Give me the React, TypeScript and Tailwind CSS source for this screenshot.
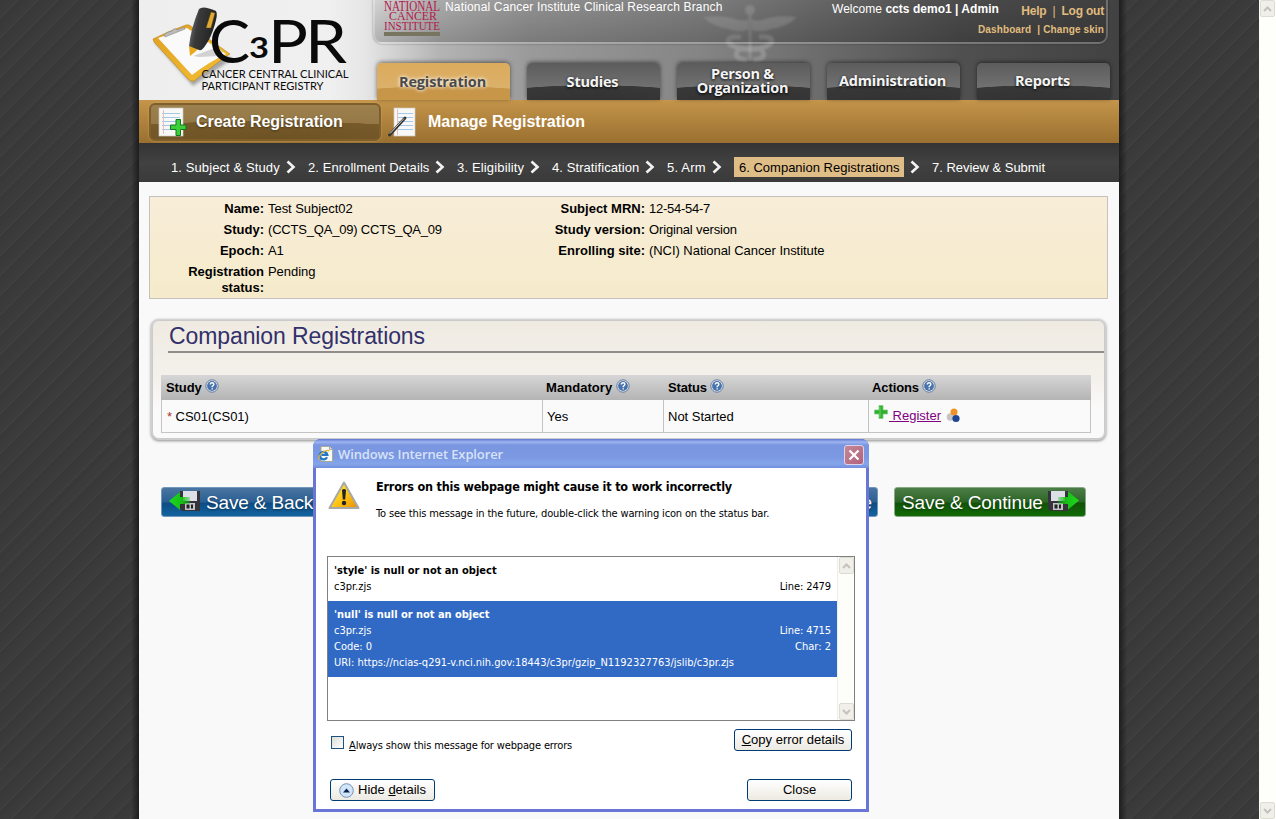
import React from "react";

const TABS = ["Registration", "Studies", "Person &\nOrganization", "Administration", "Reports"];

const STEPS = [
  { label: "1. Subject & Study", width: "w-[137px]", gap: "ml-[6px]", text: "tracking-[0.1px]" },
  { label: "2. Enrollment Details", width: "w-[149px]", gap: "ml-[6px]", text: "tracking-[0.07px]" },
  { label: "3. Eligibility", width: "w-[95px]", gap: "ml-[6px]", text: "tracking-[0.16px]" },
  { label: "4. Stratification", width: "w-[115px]", gap: "ml-[6px]", text: "tracking-[0.08px]" },
  { label: "5. Arm", width: "w-[67px]", gap: "ml-[6px]", text: "tracking-[0.2px]" },
  { label: "6. Companion Registrations", width: "w-[198px]", gap: "ml-[6px]", text: "" },
  { label: "7. Review & Submit", width: "w-[130px]", gap: "", text: "tracking-[-0.02px]" },
];

const STRIPES =
  "bg-[#393939] bg-[repeating-linear-gradient(135deg,#383838_0px,#3a3a3a_6px,#3c3c3c_12px,#414141_13px,#383838_14px)]";

function Gutter({ side }: { side: "left" | "right" }) {
  return (
    <div className={`flex h-full shrink-0 ${side === "left" ? "w-[139px] justify-end" : "w-[140px]"} ${STRIPES}`}>
      <div
        className={
          side === "left"
            ? "h-full w-2 bg-gradient-to-r from-transparent to-black/50"
            : "h-full w-2 bg-gradient-to-l from-transparent to-black/50"
        }
      />
    </div>
  );
}

function Logo() {
  return (
    <svg width="233" height="100" viewBox="0 0 233 100" className="shrink-0">
      <defs>
        <linearGradient id="pen" x1="0" x2="1" y1="0" y2="0.3">
          <stop offset="0" stopColor="#888" />
          <stop offset="0.4" stopColor="#3a3a3a" />
          <stop offset="1" stopColor="#222" />
        </linearGradient>
        <linearGradient id="gold" x1="0" x2="1" y1="0" y2="1">
          <stop offset="0" stopColor="#e0a020" />
          <stop offset="1" stopColor="#f4bf35" />
        </linearGradient>
        <filter id="soft" x="-20%" y="-20%" width="140%" height="140%">
          <feGaussianBlur stdDeviation="1.6" />
        </filter>
      </defs>
      <path d="M15 42 L54 86 L93 59 L60 40 Z" fill="#000" opacity="0.3" filter="url(#soft)" />
      <path d="M14 39 Q30 31 47 25 Q50 24 53 27 L91 54 Q76 64 55 81 Q52 82 49 79 L15 42 Z" fill="url(#gold)" stroke="#b9821c" strokeWidth="0.6" />
      <path d="M19 38 L48 28 L87 54 Q70 62 53 75 Z" fill="#fafafa" />
      <path d="M54 56 L76 48 L84 52 L80 56 L60 57 Z" fill="#aaa" opacity="0.5" />
      <path d="M25 35 Q27 32 33 31 Q35 27 38 30 Q41 29 45 27 L46 29 L26 37 Z" fill="#bbb" stroke="#888" strokeWidth="0.6" />
      <path d="M50 46 L60 48 L56 52 L51 56 Z" fill="#e9a91f" />
      <path d="M60 9 Q64 5 77 11 Q79 14 76 24 Q72 38 66 46 Q63 51 60 50 L50 46 Q52 28 60 9 Z" fill="url(#pen)" />
      <path d="M72 12 L76 13 L72 28 L67 28 Z" fill="#e3aa32" stroke="#5b4718" strokeWidth="0.5" />
      <g fontFamily="Lato, sans-serif" fill="#0a0a0a" fontWeight="400">
        <text x="70" y="63" fontSize="60" textLength="41" lengthAdjust="spacingAndGlyphs">C</text>
        <text x="110" y="58" fontSize="29" fontWeight="700" textLength="20" lengthAdjust="spacingAndGlyphs">3</text>
        <text x="129" y="63" fontSize="60" textLength="40" lengthAdjust="spacingAndGlyphs">P</text>
        <text x="166" y="63" fontSize="60" textLength="42" lengthAdjust="spacingAndGlyphs">R</text>
        <text x="62.5" y="78" fontSize="11.3" textLength="147" lengthAdjust="spacingAndGlyphs">CANCER CENTRAL CLINICAL</text>
        <text x="62.5" y="90" fontSize="11.3" textLength="122" lengthAdjust="spacingAndGlyphs">PARTICIPANT REGISTRY</text>
      </g>
    </svg>
  );
}

function NciLogo() {
  return (
    <svg width="57" height="37" viewBox="0 0 57 37" className="shrink-0">
      <g fontFamily="'Liberation Serif', serif" fill="#b3194d">
        <text x="0" y="10.500" fontSize="14" textLength="56" lengthAdjust="spacingAndGlyphs">NATIONAL</text>
        <text x="5" y="20.300" fontSize="13.500" textLength="48" lengthAdjust="spacingAndGlyphs">CANCER</text>
        <text x="0" y="30" fontSize="13.500" textLength="56" lengthAdjust="spacingAndGlyphs">INSTITUTE</text>
      </g>
      <rect x="0" y="32" width="56" height="4" fill="#77745f" />
    </svg>
  );
}

function Caduceus() {
  return (
    <svg width="96" height="60" viewBox="0 0 96 60" className="blur-[1.2px]">
      <g fill="#c4c4c4" opacity="0.3">
        <circle cx="47" cy="7" r="5" />
        <rect x="45.500" y="10" width="3" height="48" />
        <path d="M0 14 Q20 12 32 16 Q42 19 45 16 L45 27 Q34 30 26 26 Q10 24 0 14 Z" />
        <path d="M94 14 Q74 12 62 16 Q52 19 49 16 L49 27 Q60 30 68 26 Q84 24 94 14 Z" />
      </g>
      <g fill="none" stroke="#c4c4c4" opacity="0.35" strokeWidth="5">
        <path d="M38 34 Q22 33 26 40 Q32 47 58 46 Q66 56 50 57" />
        <path d="M56 34 Q72 33 68 40 Q62 47 36 46 Q28 56 44 57" />
      </g>
    </svg>
  );
}

function Sheet({ kind }: { kind: "add" | "edit" }) {
  const add = kind === "add";
  return (
    <svg width="29" height="31" viewBox="0 0 29 31" className="shrink-0">
      <rect x={add ? 1 : 6} y="1" width={add ? 24 : 21} height="28" fill="#f8f8f6" stroke="#cfcac0" strokeWidth="0.7" />
      <g stroke="#a4c8ea" strokeWidth="1">
        {[6.5, 10.5, 14.5, 18.5, 22.5].map((y) => (
          <path key={y} d={add ? `M4 ${y} H22` : `M9 ${y} H25`} />
        ))}
      </g>
      <path d={add ? "M5.500 3 V27" : "M9.500 2 V28"} stroke="#f0bcbc" strokeWidth="1" />
      {add ? (
        <path d="M18 12.500 h4.500 v5.500 h5.500 v4.500 h-5.500 v6 h-4.500 v-6 h-5.500 v-4.500 h5.500 z" fill="#3bcf3b" stroke="#14761a" strokeWidth="1" />
      ) : (
        <g>
          <path d="M1.500 28 L17 11" stroke="#333" strokeWidth="2.800" strokeLinecap="round" />
          <path d="M2 26.500 L16 11.500" stroke="#ccc" strokeWidth="1" />
        </g>
      )}
    </svg>
  );
}

function HelpMark({ gap }: { gap: string }) {
  return (
    <svg width="14" height="14" viewBox="0 0 14 14" className={`${gap} mt-[-2px] shrink-0`}>
      <circle cx="7" cy="7" r="6.200" fill="#e9eef5" stroke="#62799b" strokeWidth="1" />
      <circle cx="7" cy="7" r="4.900" fill="#4772ab" />
      <path d="M5.300 5.600 Q5.300 3.700 7.100 3.700 Q8.900 3.700 8.900 5.300 Q8.900 6.300 7.200 7.300 V8.200 M7.200 9.300 V10.600" fill="none" stroke="#fff" strokeWidth="1.400" />
    </svg>
  );
}

function Floppy({ dir }: { dir: "left" | "right" }) {
  const x = dir === "left" ? 11 : 0;
  return (
    <svg width="32" height="24" viewBox="0 0 32 24" className="shrink-0">
      <defs>
        <linearGradient id={`arrow-${dir}`} x1={dir === "left" ? 0 : 1} x2={dir === "left" ? 1 : 0}>
          <stop offset="0" stopColor="#1fd81f" />
          <stop offset="0.6" stopColor="#16c016" />
          <stop offset="1" stopColor="#16c016" stopOpacity="0.3" />
        </linearGradient>
      </defs>
      <g transform={`translate(${x} 0)`}>
        <path d="M0 1 H20 V21 H2 L0 19 Z" fill="#34343a" />
        <rect x="3" y="1" width="14" height="10" fill="#dcdfe6" />
        <rect x="5" y="13" width="10" height="7" fill="#c4c4c8" />
        <rect x="6.500" y="14.500" width="3" height="4" fill="#222" />
        <rect x="11" y="14.500" width="2" height="4" fill="#222" />
      </g>
      {dir === "left" ? (
        <path d="M0 11 L11 2 V7 H21 V14 H11 V20 Z" fill="url(#arrow-left)" />
      ) : (
        <path d="M31 10.500 L20 1.500 V7 H10 V14 H20 V19.500 Z" fill="url(#arrow-right)" />
      )}
    </svg>
  );
}

function Chevron() {
  return (
    <svg width="10" height="14" viewBox="0 0 10 14" className="shrink-0">
      <path d="M1.500 1.500 L7.500 7 L1.500 12.500" fill="none" stroke="#f2f2f2" strokeWidth="2.600" />
    </svg>
  );
}

function ScrollArrow({ up }: { up: boolean }) {
  return (
    <div className="flex h-[17px] w-[15px] items-center justify-center rounded-[2px] border border-[#dddcd2] bg-[#f0efe9]">
      <svg width="9" height="6" viewBox="0 0 9 6">
        <path d={up ? "M1 5 L4.500 1.500 L8 5" : "M1 1 L4.500 4.500 L8 1"} fill="none" stroke="#c4c3bb" strokeWidth="2" />
      </svg>
    </div>
  );
}

function Field({ label, children, labelWidth = "w-[114px]" }: { label: string; children: React.ReactNode; labelWidth?: string }) {
  return (
    <div className="mb-[5px] flex gap-1 leading-4">
      <div className={`${labelWidth} shrink-0 text-right font-bold`}>{label}</div>
      <div className="whitespace-nowrap tracking-[-0.05px]">{children}</div>
    </div>
  );
}

function Header() {
  return (
    <header className="relative flex h-[100px] shrink-0 bg-[linear-gradient(90deg,#eeeeee_0px,#f0f0f0_190px,#e6e6e6_225px,#b4b4b4_300px,#9a9a9a_390px,#858585_560px,#6c6c6c_680px,#505050_820px,#424242_980px)]">
      <Logo />
      <div className="absolute left-[564px] top-[3px]">
        <Caduceus />
      </div>
      <div className="relative flex flex-1 flex-col">
        <div className="ml-px flex h-[44px] w-[735px] rounded-b-[9px] border-2 border-t-0 border-white/25 bg-gradient-to-b from-black/5 to-black/20 pl-[9px] shadow-[0_0_2px_rgba(0,0,0,0.4)]">
          <NciLogo />
          <div className="ml-[4px] w-[387px] whitespace-nowrap text-[12px] leading-[14px] tracking-[0.16px] text-white">
            National Cancer Institute Clinical Research Branch
          </div>
          <div className="w-[190px] whitespace-nowrap pt-[2px] text-[12px] leading-[14px] tracking-[0.03px] text-white">
            Welcome <b>ccts demo1 | Admin</b>
          </div>
          <div className="-ml-[44px] flex w-[126px] flex-col whitespace-nowrap text-[#e0bc7e]">
            <div className="flex h-[14px] items-center justify-end gap-[6px] pt-[8px] text-[12px] font-bold tracking-[-0.2px]">
              <span>Help</span>
              <span className="font-normal">|</span>
              <span>Log out</span>
            </div>
            <div className="mt-[9px] flex justify-end gap-[3px] text-[10px] font-bold leading-[14px] tracking-[0.12px]">
              <span className="mr-[3px]">Dashboard</span>
              <span>|</span>
              <span>Change skin</span>
            </div>
          </div>
        </div>
        <nav className="ml-[5px] mt-[19px] flex gap-[17px]">
          {TABS.map((tab, i) => (
            <div
              key={tab}
              className={
                i === 0
                  ? "flex h-[37px] w-[133px] items-center justify-center rounded-t-[5px] bg-[radial-gradient(120px_14px_at_50%_100%,#c89648_0px,#c89648_96%,transparent_100%),linear-gradient(#dcab5c,#dbb370)] pr-[2px] shadow-[0_-1px_4px_rgba(0,0,0,0.5)]"
                  : "flex h-[37px] w-[133px] items-center justify-center rounded-t-[5px] bg-[radial-gradient(120px_15px_at_50%_100%,#323232_0px,#383838_96%,transparent_100%),linear-gradient(#5c5c5c,#7c7c7c)] pr-[2px] shadow-[0_-1px_4px_rgba(0,0,0,0.5)]"
              }
            >
              <span
                className={`whitespace-pre text-center font-['Open_Sans','Noto_Sans',sans-serif] text-[14.500px] font-bold leading-[14px] ${
                  i === 0
                    ? "tracking-[-0.15px] text-[#4a4a4a] [text-shadow:0_0_4px_#fff,0_0_3px_#fff8]"
                    : "tracking-[-0.2px] text-[#f4f4f4] [text-shadow:0_1px_3px_#000]"
                } ${i === 2 || i === 3 || i === 4 ? "-mt-[2px]" : ""}`}
              >
                {tab}
              </span>
            </div>
          ))}
        </nav>
      </div>
    </header>
  );
}

function SubNav() {
  return (
    <div className="flex h-[43px] shrink-0 items-start bg-gradient-to-b from-[#c4954a] to-[#9a7030] pl-[10px] pt-[3px] text-[16px] font-bold text-white">
      <div className="flex h-[38px] w-[232px] items-center rounded-[6px] border-2 border-[#7e5f2b] bg-[radial-gradient(200px_18px_at_50%_100%,#6d5224_0px,#775a2a_98%,transparent_100%),linear-gradient(#9c804d,#8f7240)] pl-[7px] shadow-[0_0_2px_#d5ac62]">
        <Sheet kind="add" />
        <span className="ml-[9px] whitespace-nowrap tracking-[-0.04px] [text-shadow:0_1px_2px_#4a3818]">Create Registration</span>
      </div>
      <div className="ml-[7px] flex h-[38px] items-center">
        <Sheet kind="edit" />
        <span className="ml-[11px] whitespace-nowrap tracking-[-0.02px]">Manage Registration</span>
      </div>
    </div>
  );
}

function Steps() {
  return (
    <div className="flex h-[39px] shrink-0 bg-gradient-to-b from-[#343434] via-[#414141] to-[#3a3a3a] pl-[32px] pt-[14px] text-[13px] leading-[22px] text-white">
      {STEPS.map((s, i) => (
        <div key={s.label} className={`${s.width} flex h-5 items-center whitespace-nowrap`}>
          <span className={i === 5 ? "h-5 w-[170px] bg-[#dfbd87] pl-[5px] text-black" : `h-5 ${s.text}`}>{s.label}</span>
          {i < 6 && (
            <span className={s.gap}>
              <Chevron />
            </span>
          )}
        </div>
      ))}
    </div>
  );
}

function Summary() {
  return (
    <section className="mx-[10px] mt-[14px] flex h-[103px] w-[959px] shrink-0 border border-[#c5c2bd] bg-gradient-to-b from-[#f8edd8] to-[#f5ebcb] pt-[4px] text-[13px] text-black">
      <div className="w-[381px]">
        <Field label="Name:">Test Subject02</Field>
        <Field label="Study:"><span className="tracking-[-0.2px]">(CCTS_QA_09) CCTS_QA_09</span></Field>
        <Field label="Epoch:">A1</Field>
        <Field label="Registration status:" labelWidth="w-[114px] pl-[30px]">Pending</Field>
      </div>
      <div>
        <Field label="Subject MRN:"><span className="tracking-[-0.25px]">12-54-54-7</span></Field>
        <Field label="Study version:"><span className="tracking-[-0.15px]">Original version</span></Field>
        <Field label="Enrolling site:">(NCI) National Cancer Institute</Field>
      </div>
    </section>
  );
}

function Companions() {
  return (
    <section className="ml-[13px] mt-[21px] flex h-[119px] w-[953px] shrink-0 flex-col rounded-[7px] border border-[#cbcbcb] bg-[linear-gradient(#efebe2,#f4f1ec_50%,#fbfafa_75%)] shadow-[0_0_1px_1px_#d4d4d4,0_1px_3px_1px_#888]">
      <h2 className="ml-[15px] h-[32px] shrink-0 whitespace-nowrap border-b-2 border-[#918b8b] pl-px text-[23px] leading-[31px] tracking-[-0.1px] text-[#33306b]">
        Companion Registrations
      </h2>
      <div className="ml-[8px] mt-[22px] w-[930px] text-[13px] text-black">
        <div className="flex h-[25px] items-center bg-gradient-to-b from-[#d6d6d6] to-[#b4b4b4] pb-px font-bold">
          <div className="flex w-[380px] items-center pl-[5px]"><span className="mt-[2px] tracking-[-0.1px]">Study</span><HelpMark gap="ml-[3px]" /></div>
          <div className="flex w-[121px] items-center pl-[5px]"><span className="mt-[2px] tracking-[0.05px]">Mandatory</span><HelpMark gap="ml-[4px]" /></div>
          <div className="flex w-[205px] items-center pl-[6px]"><span className="mt-[2px] tracking-[-0.15px]">Status</span><HelpMark gap="ml-[3px]" /></div>
          <div className="flex items-center pl-[5px]"><span className="mt-[2px] tracking-[-0.1px]">Actions</span><HelpMark gap="ml-[3px]" /></div>
        </div>
        <div className="flex h-[33px] border border-t-0 border-[#c4c4c4] bg-[#fafafa] leading-[34px]">
          <div className="w-[381px] border-r border-[#c4c4c4] pl-[5px] tracking-[-0.05px]"><span className="text-[#a33]">*</span> CS01(CS01)</div>
          <div className="w-[121px] border-r border-[#c4c4c4] pl-[4px]">Yes</div>
          <div className="w-[205px] border-r border-[#c4c4c4] pl-[4px]">Not Started</div>
          <div className="flex pl-[5px]">
            <svg width="14" height="14" viewBox="0 0 14 14" className="mt-[5px]">
              <path d="M5 0.500 H9 V5 H13.500 V9 H9 V13.500 H5 V9 H0.500 V5 H5 Z" fill="#2fae2f" stroke="#7fce7f" strokeWidth="0.800" />
              <path d="M6 2 V12" stroke="#6bdc5f" strokeWidth="1" />
            </svg>
            <a className="ml-px whitespace-pre leading-[32px] text-[#800080] underline"> Register</a>
            <svg width="15" height="15" viewBox="0 0 15 15" className="ml-[5px] mt-[8px]">
              <circle cx="4.500" cy="9" r="3.800" fill="#c4c4c4" />
              <circle cx="8" cy="4" r="3.500" fill="#f39224" />
              <circle cx="10" cy="10.500" r="3.600" fill="#1f4694" />
            </svg>
          </div>
        </div>
      </div>
    </section>
  );
}

const BLUE =
  "flex h-[30px] items-center rounded-[3px] border border-[#7397bb] bg-[linear-gradient(#4a74a0,#2a5f93_50%,#0f4c84_54%,#1265a0)] text-[19px] tracking-[-0.15px] text-white [text-shadow:0_1px_2px_#0006]";

function Actions() {
  return (
    <div className="mt-[48px] flex h-[30px] shrink-0 pl-[22px]">
      <button className={`${BLUE} w-[160px] gap-[5px] pl-[7px] whitespace-nowrap`}>
        <Floppy dir="left" />
        <span className="pt-[3px]">Save &amp; Back</span>
      </button>
      <button className={`${BLUE} ml-[456px] w-[101px] justify-end pr-[5px]`}>
        <span className="pt-[3px]">Save</span>
      </button>
      <button className="ml-[16px] flex h-[30px] w-[192px] items-center gap-[5px] whitespace-nowrap rounded-[3px] border border-[#8aa888] bg-[linear-gradient(#4c7d48,#2c6526_50%,#125208_54%,#116b06)] pl-[7px] text-[19px] tracking-[-0.12px] text-white [text-shadow:0_1px_2px_#0006]">
        <span className="pt-[3px]">Save &amp; Continue</span>
        <Floppy dir="right" />
      </button>
    </div>
  );
}

const XP_BUTTON =
  "flex h-[22px] items-center justify-center whitespace-nowrap rounded-[3px] border border-[#003c74] bg-gradient-to-b from-white to-[#eceae2] font-['Liberation_Sans',sans-serif] text-[13px] text-black";

function ErrorDialog() {
  return (
    <div className="absolute left-[313px] top-[439px] flex h-[373px] w-[556px] flex-col rounded-t-[8px] border-x-[3px] border-b-[3px] border-[#6a76d6] bg-[#6a76d6] font-['DejaVu_Sans_Condensed','DejaVu_Sans',sans-serif] text-[11px] text-black shadow-[inset_0_0_1px_#4048b0]">
      <div className="-mx-[3px] flex h-[29px] shrink-0 items-center rounded-t-[8px] bg-[linear-gradient(#6076d4_0px,#9db5f0_3px,#7a96e0_6px,#7b98e2_18px,#84a5ea_25px,#728ddd_29px)] pl-[5px] pr-[5px] pt-[2px]">
        <svg width="16" height="16" viewBox="0 0 16 16" className="-mt-[2px] shrink-0">
          <path d="M3 0.500 H11.500 L14.500 3.500 V15.500 H3 Z" fill="#fbfaf2" stroke="#a9a998" />
          <path d="M11.500 0.500 V3.500 H14.500" fill="#ddd" stroke="#a9a998" />
          <path d="M9 11.300 A3.800 3.800 0 1 1 9.300 8.800 H3.500" fill="none" stroke="#2277c9" strokeWidth="2.300" />
          <path d="M0.800 13.500 Q0 9 7 5 Q11 3.500 11 5.500" fill="none" stroke="#e8b52e" strokeWidth="1.300" />
        </svg>
        <span className="ml-[4px] flex-1 whitespace-nowrap pt-px font-['Open_Sans','Noto_Sans',sans-serif] text-[13px] font-semibold tracking-[-0.12px] text-[#d8e2f8]">
          Windows Internet Explorer
        </span>
        <div className="flex h-[20px] w-[20px] items-center justify-center rounded-[3px] border border-[#dfd3ec] bg-[linear-gradient(135deg,#c58898,#b0627a)]">
          <svg width="12" height="12" viewBox="0 0 12 12">
            <path d="M1.500 1.500 L10.500 10.500 M10.500 1.500 L1.500 10.500" stroke="#fff" strokeWidth="2.200" />
          </svg>
        </div>
      </div>
      <div className="flex flex-1 flex-col bg-white">
        <div className="flex h-[88px] shrink-0 pl-[12px]">
          <svg width="32" height="30" viewBox="0 0 32 30" className="mt-[13px] shrink-0">
            <defs>
              <linearGradient id="warn" x1="0" x2="1" y1="0" y2="1">
                <stop offset="0" stopColor="#fff04a" />
                <stop offset="0.500" stopColor="#ffc916" />
                <stop offset="1" stopColor="#e88d00" />
              </linearGradient>
            </defs>
            <path d="M16 1.500 L30.500 27 H1.500 Z" fill="url(#warn)" stroke="#a8a8a8" strokeWidth="2" strokeLinejoin="round" />
            <path d="M14 9 Q16 7 18 9 L17.200 18.500 H14.800 Z" fill="#222" />
            <circle cx="16" cy="22" r="2.200" fill="#222" />
          </svg>
          <div className="ml-[16px] pt-[10px]">
            <div className="whitespace-nowrap text-[12.500px] font-bold leading-[18px] tracking-[-0.18px]">Errors on this webpage might cause it to work incorrectly</div>
            <div className="mt-[11px] whitespace-nowrap leading-[14px] tracking-[-0.15px]">To see this message in the future, double-click the warning icon on the status bar.</div>
          </div>
        </div>
        <div className="ml-[11px] flex h-[165px] w-[528px] shrink-0 border border-[#808080]">
          <div className="flex-1 leading-4">
            <div className="h-[44px] px-[6px] pt-[6px]">
              <div className="font-bold">&#39;style&#39; is null or not an object</div>
              <div className="flex justify-between"><span>c3pr.zjs</span><span className="tracking-[-0.1px]">Line: 2479</span></div>
            </div>
            <div className="h-[76px] bg-[#316ac5] px-[6px] pt-[6px] text-white">
              <div className="font-bold tracking-[-0.03px]">&#39;null&#39; is null or not an object</div>
              <div className="flex justify-between"><span>c3pr.zjs</span><span className="tracking-[-0.1px]">Line: 4715</span></div>
              <div className="flex justify-between"><span>Code: 0</span><span>Char: 2</span></div>
              <div className="whitespace-nowrap tracking-[-0.02px]">URI: https://ncias-q291-v.nci.nih.gov:18443/c3pr/gzip_N1192327763/jslib/c3pr.zjs</div>
            </div>
          </div>
          <div className="flex w-[17px] flex-col items-center justify-between border-l border-[#eeeee6] bg-[#fdfdfa]">
            <ScrollArrow up />
            <ScrollArrow up={false} />
          </div>
        </div>
        <div className="flex h-[50px] shrink-0 justify-between pl-[15px] pr-[14px] pt-[8px]">
          <div className="flex">
            <div className="mt-[7px] h-[13px] w-[13px] border border-[#1c5180] bg-[linear-gradient(135deg,#dcdcd7,#fff)]" />
            <span className="ml-[5px] mt-[9px] whitespace-nowrap leading-4 tracking-[-0.15px]"><u>A</u>lways show this message for webpage errors</span>
          </div>
          <button className={`${XP_BUTTON} w-[118px]`}><span><u>C</u>opy error details</span></button>
        </div>
        <div className="flex h-[32px] shrink-0 items-start justify-between pl-[14px] pr-[14px] pt-[8px]">
          <button className={`${XP_BUTTON} w-[105px] gap-[4px]`}>
            <svg width="15" height="15" viewBox="0 0 15 15">
              <circle cx="7.500" cy="7.500" r="6.800" fill="#d2e4f8" stroke="#6f93bd" />
              <path d="M4 9.500 L7.500 5.500 L11 9.500 Z" fill="#0a2050" />
            </svg>
            <span>Hide <u>d</u>etails</span>
          </button>
          <button className={`${XP_BUTTON} w-[105px]`}>Close</button>
        </div>
      </div>
    </div>
  );
}

export default function App() {
  return (
    <div className="relative flex h-[819px] w-[1276px] overflow-hidden bg-[#3a3a3a] font-['Liberation_Sans',Arial,sans-serif]">
      <Gutter side="left" />
      <main className="flex h-full w-[980px] shrink-0 flex-col bg-[#f9f9f9]">
        <Header />
        <SubNav />
        <Steps />
        <Summary />
        <Companions />
        <Actions />
      </main>
      <Gutter side="right" />
      <div className="flex h-full w-[17px] shrink-0 flex-col items-center justify-between bg-[#fefefa]">
        <ScrollArrow up />
        <ScrollArrow up={false} />
      </div>
      <ErrorDialog />
    </div>
  );
}
